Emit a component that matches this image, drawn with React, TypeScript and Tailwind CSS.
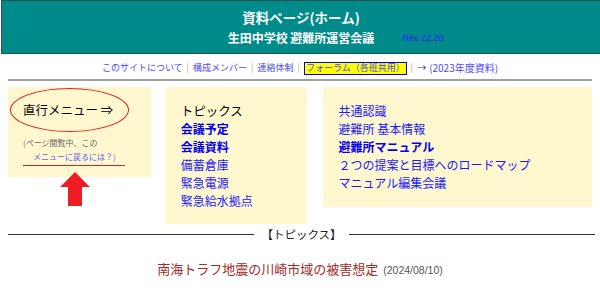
const jp = { fontFamily: '"Noto Sans CJK JP", "Noto Sans", sans-serif' };

const navLinks = ["このサイトについて", "構成メンバー", "連絡体制"];

const topicLinks = [
  { label: "会議予定", bold: true },
  { label: "会議資料", bold: true },
  { label: "備蓄倉庫", bold: false },
  { label: "緊急電源", bold: false },
  { label: "緊急給水拠点", bold: false },
];

const commonLinks = [
  { label: "共通認識", bold: false },
  { label: "避難所 基本情報", bold: false },
  { label: "避難所マニュアル", bold: true },
  { label: "２つの提案と目標へのロードマップ", bold: false },
  { label: "マニュアル編集会議", bold: false },
];

function Sep() {
  return <span className="mx-[4px] text-[#f0a040]">|</span>;
}

export default function App() {
  return (
    <div className="w-[600px] h-[290px] overflow-hidden bg-white" style={jp}>
      {/* header */}
      <div className="ml-px w-[599px] h-[54px] border border-r-0 border-[#2f4f4f] bg-[#008b8b] pt-[7px] text-center text-white font-bold">
        <div className="text-[13.5px] leading-[18px]">資料ページ(ホーム)</div>
        <div className="mt-[4px] text-[12px] leading-[16px]">
          <span className="relative">
            生田中学校 避難所運営会議
            <span className="absolute left-full top-[1px] ml-[28px] whitespace-nowrap text-[9px] font-normal text-[#1a1aff]" style={{ fontFamily: '"Liberation Sans", sans-serif' }}>
              Rev 22.20
            </span>
          </span>
        </div>
      </div>

      {/* nav */}
      <div className="mt-[7px] h-[14px] flex items-center justify-center text-[9px] leading-[14px] text-[#4a4aff]">
        {navLinks.map((l) => (
          <span key={l} className="flex items-center">
            <span>{l}</span>
            <Sep />
          </span>
        ))}
        <span className="px-[1px] h-[13px] flex items-center border-[1.5px] border-[#0000ee] bg-[#ffff00] text-[#4a4aff]">フォーラム（各班共用）</span>
        <Sep />
        <span className="text-[#333]">→</span>
        <span className="ml-[3px] text-[10px]">(2023年度資料)</span>
      </div>

      <div className="mx-2 mt-[4px] h-[2px] bg-[#a0a0a0]" />

      {/* boxes */}
      <div className="mx-2 mt-[6px] flex items-start">
        <div className="w-[143px] flex flex-col">
          <div className="bg-[#fff8cf] pt-px pl-[2px] pb-[11px]">
            <div className="w-[119px] h-[44px] rounded-[50%] border border-[#e02020] flex items-center pl-[12px] text-[12.5px] text-black">
              直行メニュー ⇒
            </div>
            <div className="ml-[13px] mt-[4px] w-[102px] border-b border-[#e02020] text-[8px] leading-[14px] pb-[1px]">
              <div className="text-[#666]">(ページ閲覧中、この</div>
              <div className="pl-[10px] text-[#6060ff]">メニューに戻るには？)</div>
            </div>
          </div>
          <svg className="ml-[52px] -mt-[5px]" width="30" height="34" viewBox="0 0 30 34">
            <polygon points="15,0 30,15 22,15 22,34 8,34 8,15 0,15" fill="#ee1c25" />
          </svg>
        </div>

        <div className="ml-[15px] w-[141px] bg-[#fff8cf] pt-[15px] pb-[14px] pl-[15px] text-[12px] leading-[18px]">
          <div className="text-black text-[12.5px]">トピックス</div>
          {topicLinks.map((l) => (
            <div key={l.label} className={l.bold ? "font-bold text-[#0000ee]" : "text-[#1a1aff]"}>
              {l.label}
            </div>
          ))}
        </div>

        <div className="ml-[16px] w-[270px] bg-[#fff8cf] pt-[15px] pb-[15px] pl-[16px] text-[12px] leading-[18px]">
          {commonLinks.map((l) => (
            <div key={l.label} className={l.bold ? "font-bold text-[#0000ee]" : "text-[#1a1aff]"}>
              {l.label}
            </div>
          ))}
        </div>
      </div>

      {/* topics divider */}
      <div className="ml-2 mr-[5px] mt-[3px] h-[14px] flex items-center gap-[7px]">
        <div className="flex-1 h-px bg-[#333]" />
        <span className="text-[11.5px] leading-[14px] text-[#222]">【トピックス】</span>
        <div className="flex-1 h-px bg-[#333]" />
      </div>

      <div className="mt-[19px] flex items-baseline justify-center">
        <span className="text-[13px] leading-[18px] text-[#a52a2a]">南海トラフ地震の川崎市域の被害想定</span>
        <span className="ml-[5px] text-[10.5px] text-[#555]" style={{ fontFamily: '"Liberation Sans", sans-serif' }}>(2024/08/10)</span>
      </div>
    </div>
  );
}
